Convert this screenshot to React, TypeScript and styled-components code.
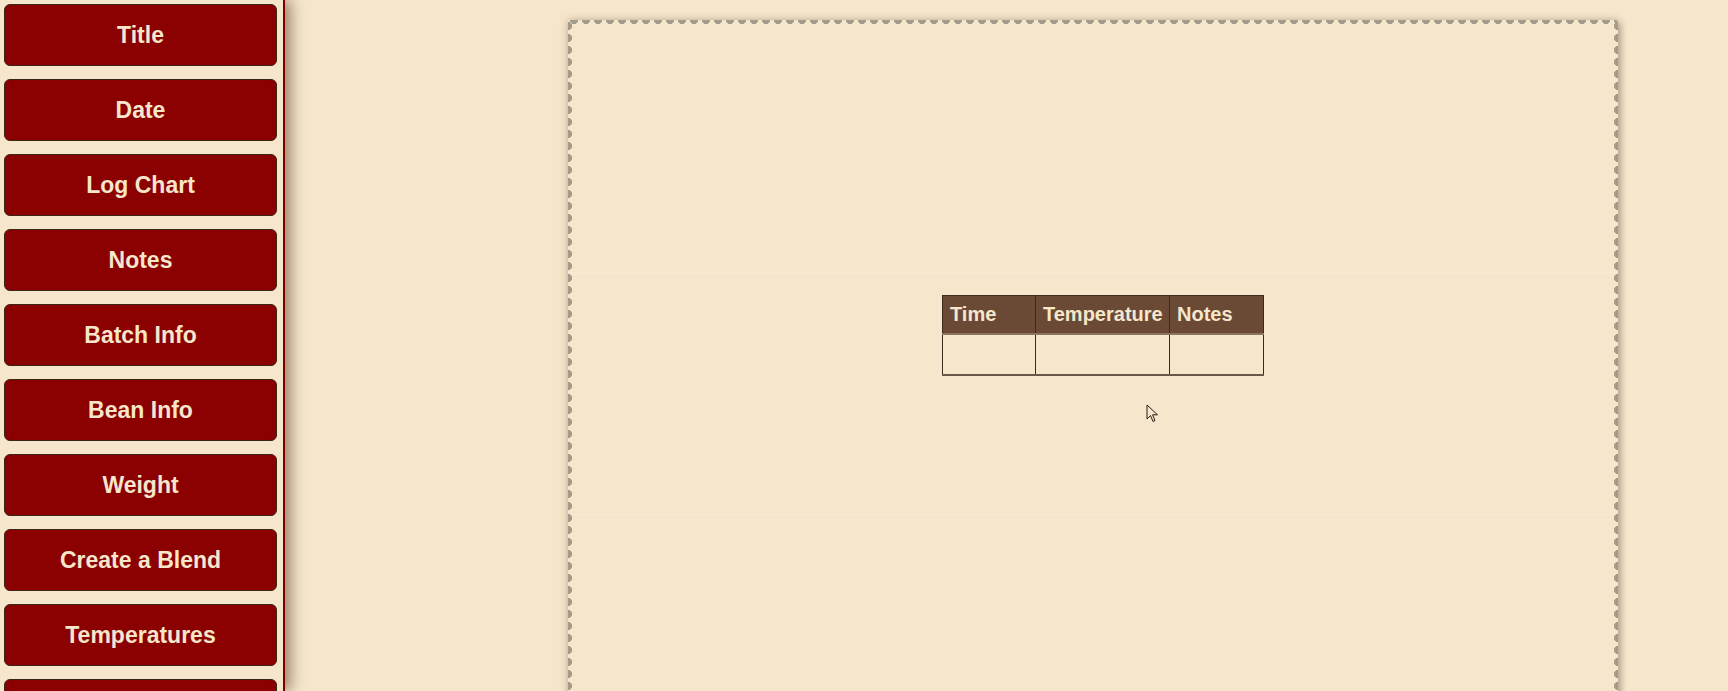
import React from "react";
import styled, { createGlobalStyle } from "styled-components";

const GlobalStyle = createGlobalStyle`
  html, body {
    margin: 0;
    padding: 0;
    height: 100%;
    overflow: hidden;
    background: #f5e6cc;
    font-family: "Liberation Sans", Arial, sans-serif;
  }
`;

const Layout = styled.div`
  display: flex;
  height: 100vh;
  width: 100vw;
  background: #f5e6cc;
`;

const Sidebar = styled.aside`
  flex: 0 0 285px;
  display: flex;
  flex-direction: column;
  gap: 13px;
  padding: 4px 0 4px 4px;
  box-sizing: border-box;
  border-right: 2px solid #7a0000;
  box-shadow: 5px 0 14px rgba(90, 55, 25, 0.6);
  overflow: hidden;
  position: relative;
  z-index: 2;
`;

const NavButton = styled.button`
  flex: 0 0 62px;
  width: 273px;
  background: #8b0000;
  color: #f5e6cc;
  border: 1px solid #3b2418;
  border-radius: 6px;
  font-family: "Liberation Sans", Arial, sans-serif;
  font-weight: 700;
  font-size: 23px;
  cursor: pointer;
`;

const Main = styled.main`
  flex: 1;
  padding: 20px 0 0 283px;
  overflow: hidden;
`;

const Page = styled.div`
  position: relative;
  width: 1050px;
  height: 1100px;
  background:
    radial-gradient(circle, #a39c8c 3.8px, transparent 4.4px) 0 -5px / 12px 10px repeat-x,
    radial-gradient(circle, #a39c8c 3.8px, transparent 4.4px) -5px 0 / 10px 12px repeat-y,
    radial-gradient(circle, #a39c8c 3.8px, transparent 4.4px) right -5px top 0 / 10px 12px repeat-y,
    linear-gradient(rgba(255, 255, 255, 0.18), rgba(255, 255, 255, 0.18)) 0 252px / 100% 1px no-repeat,
    linear-gradient(rgba(255, 255, 255, 0.18), rgba(255, 255, 255, 0.18)) 0 494px / 100% 1px no-repeat,
    #f5e6cc;
  box-shadow: 0 0 8px rgba(80, 60, 30, 0.3), 3px 3px 6px rgba(80, 60, 30, 0.25);
  border-radius: 3px;
`;

const LogTable = styled.table`
  position: absolute;
  left: 374px;
  top: 275px;
  border-collapse: collapse;
  font-family: "Liberation Sans", Arial, sans-serif;
`;

const HeadCell = styled.th<{ $w: number }>`
  width: ${(p) => p.$w}px;
  height: 38px;
  box-sizing: border-box;
  padding: 1px 6px 0 7px;
  background: #6b4a35;
  color: #f5e6cc;
  font-size: 20px;
  font-weight: 700;
  text-align: left;
  white-space: nowrap;
  border: 1px solid #3e2a1a;
  border-bottom: 2px solid #8c7260;
`;

const BodyCell = styled.td`
  height: 37px;
  border: 1px solid #3e2a1a;
  border-bottom: 2px solid #6b5848;
`;

const Pointer = styled.svg`
  position: absolute;
  left: 578px;
  top: 384px;
`;

const navItems = [
  "Title",
  "Date",
  "Log Chart",
  "Notes",
  "Batch Info",
  "Bean Info",
  "Weight",
  "Create a Blend",
  "Temperatures",
  "Roast Level",
];

export default function App() {
  return (
    <>
      <GlobalStyle />
      <Layout>
        <Sidebar>
          {navItems.map((label) => (
            <NavButton key={label}>{label}</NavButton>
          ))}
        </Sidebar>
        <Main>
          <Page>
            <LogTable>
              <thead>
                <tr>
                  <HeadCell $w={93}>Time</HeadCell>
                  <HeadCell $w={134}>Temperature</HeadCell>
                  <HeadCell $w={94}>Notes</HeadCell>
                </tr>
              </thead>
              <tbody>
                <tr>
                  <BodyCell />
                  <BodyCell />
                  <BodyCell />
                </tr>
              </tbody>
            </LogTable>
            <Pointer width="14" height="20" viewBox="0 0 14 20">
              <path
                d="M1 1 L1 15 L4.5 11.5 L7 17.5 L9 16.6 L6.6 10.8 L11.5 10.8 Z"
                fill="#f5e6cc"
                stroke="#2a1d14"
                strokeWidth="1"
                strokeLinejoin="miter"
              />
            </Pointer>
          </Page>
        </Main>
      </Layout>
    </>
  );
}
